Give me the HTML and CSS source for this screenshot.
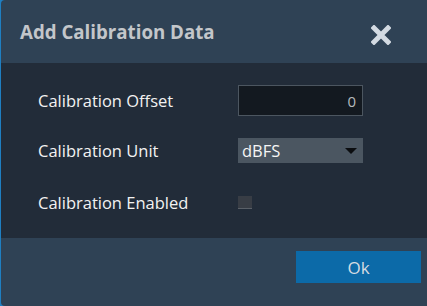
FILE: index.html
```html
<!DOCTYPE html>
<html lang="en">
<head>
    <meta charset="UTF-8">
    <title>Add Calibration Data</title>
    <link rel="stylesheet" href="styles.css">
</head>
<body>

<div class="dialog">
    <div class="dialog-header">
        <h1>Add Calibration Data</h1>
        <button class="close" aria-label="Close">
            <svg width="20" height="20" viewBox="0 0 20 20">
                <path d="M3 3 L17 17 M17 3 L3 17" stroke="#d3dae2" stroke-width="5" stroke-linecap="square"/>
            </svg>
        </button>
    </div>

    <div class="dialog-body">
        <div class="row row-offset">
            <label for="offset">Calibration Offset</label>
            <input type="text" id="offset" value="0">
        </div>
        <div class="row row-unit">
            <label for="unit">Calibration Unit</label>
            <div class="select" id="unit">
                <span>dBFS</span>
                <span class="caret"></span>
            </div>
        </div>
        <div class="row row-enabled">
            <label for="enabled">Calibration Enabled</label>
            <span class="checkbox" id="enabled"></span>
        </div>
    </div>

    <div class="dialog-footer">
        <button class="ok">Ok</button>
    </div>
</div>

</body>
</html>
```

FILE: styles.css
```css
html, body {
    margin: 0;
    height: 100%;
}

body {
    background-color: #1f7fc2;
    font-family: "Open Sans", "Noto Sans", sans-serif;
    overflow: hidden;
}

.dialog {
    margin-left: 1px;
    height: 306px;
    border-radius: 4px 0 0 4px;
    overflow: hidden;
    display: flex;
    flex-direction: column;
}

.dialog-header {
    height: 63px;
    background-color: #2f4255;
    display: flex;
    align-items: center;
    justify-content: space-between;
    padding: 0 36px 0 19px;
}

.dialog-header h1 {
    margin: 0;
    font-size: 18.7px;
    font-weight: 700;
    color: #c3c6ca;
}

.close {
    background: none;
    border: none;
    padding: 0;
    width: 20px;
    height: 20px;
    margin-top: 6px;
    cursor: pointer;
}

.close svg {
    display: block;
}

.dialog-body {
    height: 175px;
    background-color: #222c39;
    padding: 22px 0 0 37px;
    box-sizing: border-box;
}

.row {
    display: grid;
    grid-template-columns: 200px 125px;
    align-items: center;
}

.row label {
    font-size: 16.5px;
    color: #f2f2f2;
}

.row-unit {
    margin-top: 22px;
}

.row-enabled {
    margin-top: 27px;
    height: 25px;
}

input[type="text"] {
    box-sizing: border-box;
    width: 125px;
    height: 31px;
    background-color: #131920;
    border: 1px solid #4c5660;
    color: #b5b9bd;
    font-family: inherit;
    font-size: 15px;
    text-align: right;
    padding: 0 6px;
    outline: none;
}

.select {
    height: 25px;
    background-color: #4b5661;
    color: #f5f5f5;
    font-size: 16.5px;
    display: flex;
    align-items: center;
    justify-content: space-between;
    padding: 0 6px 0 4px;
    box-sizing: border-box;
}

.caret {
    width: 0;
    height: 0;
    border-left: 6px solid transparent;
    border-right: 6px solid transparent;
    border-top: 6px solid #0b0d10;
}

.checkbox {
    display: block;
    width: 14px;
    height: 13px;
    background-color: #383d45;
    border-bottom: 1px solid #5a6068;
    box-sizing: border-box;
}

.dialog-footer {
    flex: 1;
    background-color: #2f4255;
    padding-top: 13px;
    display: flex;
    justify-content: flex-end;
    align-items: flex-start;
    padding-right: 6px;
}

.ok {
    width: 125px;
    height: 32px;
    background-color: #0c6aa8;
    color: #d5dbe2;
    border: none;
    font-family: inherit;
    font-size: 17px;
    cursor: pointer;
}
```
